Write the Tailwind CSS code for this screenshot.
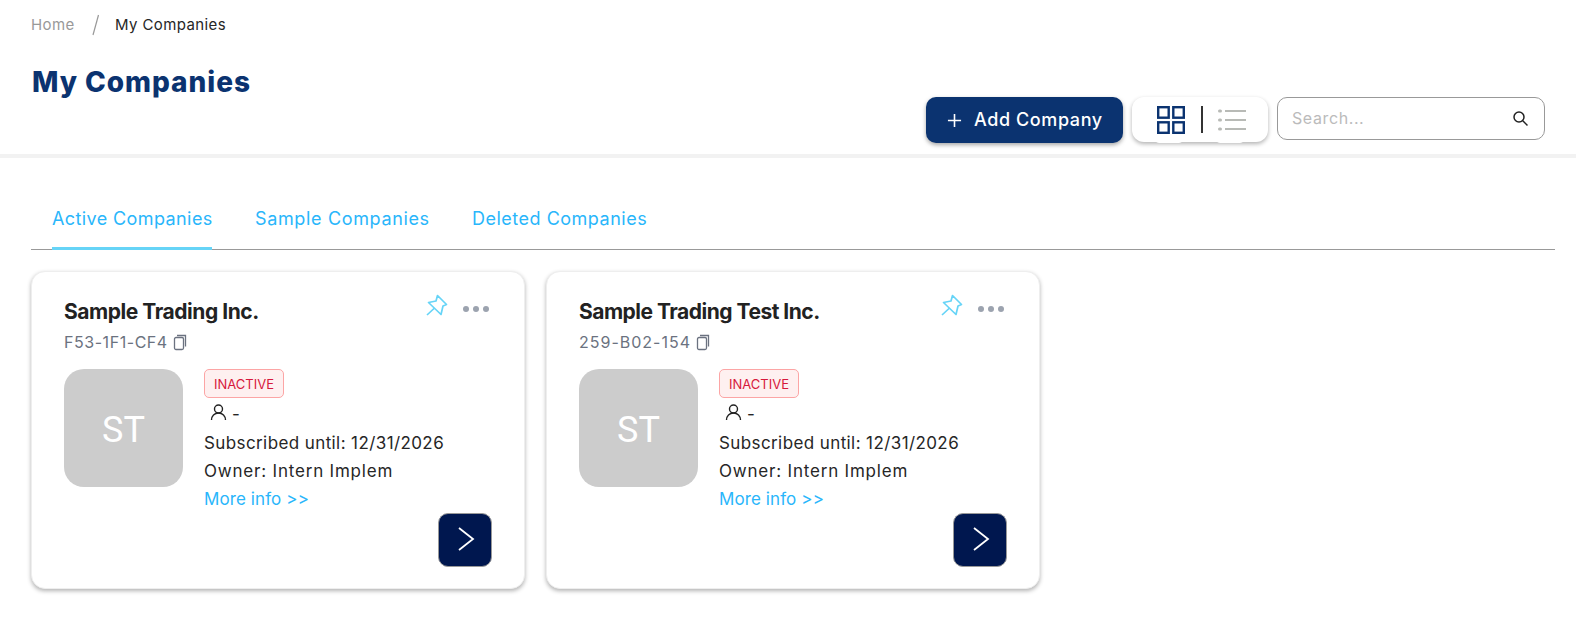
<!DOCTYPE html>
<html><head><meta charset="utf-8"><script src="https://cdn.jsdelivr.net/npm/@tailwindcss/browser@4"></script></head>
<body class="bg-white font-['Inter',sans-serif] overflow-hidden">
<div class="w-[1576px] h-[626px] bg-white">
  <header class="h-[154px] px-[31px] relative">
    <nav class="flex items-center h-[50px] text-[15px] tracking-[0.4px] text-[#262626]">
      <span class="text-[#999] w-[45px]">Home</span>
      <svg class="w-[8px] h-[22px] ml-[16px] mr-[15px]" viewBox="0 0 8 22"><path d="M6.500 1 L1 21" stroke="#999" stroke-width="1.200" fill="none"/></svg>
      <span>My Companies</span>
    </nav>
    <h1 class="mt-[12px] ml-[1px] text-[28px] leading-[40px] font-extrabold text-[#0b3370] tracking-[0.95px]">My Companies</h1>
    <div class="absolute left-[926px] top-[97px] flex gap-[9px] items-start">
      <button class="w-[197px] h-[46px] rounded-[10px] bg-[#0b3370] text-white flex items-center pl-[21px] pb-[2px] shadow-[0_2px_4px_rgba(0,0,0,0.35)] text-[18px] tracking-[0.6px] font-medium whitespace-nowrap">
        <svg class="w-[15px] h-[15px] mr-[12px] mt-[2px]" viewBox="0 0 16 16"><path d="M8 1v14M1 8h14" stroke="#fff" stroke-width="1.700"/></svg>Add Company
      </button>
      <div class="relative w-[136px] h-[45px] rounded-[12px] bg-white flex items-center shadow-[0_2px_4px_rgba(0,0,0,0.3)] pl-[25px]">
        <svg class="w-[28px] h-[28px]" viewBox="0 0 28 28" fill="none" stroke="#0b3370" stroke-width="2.400"><rect x="1.200" y="1.200" width="10.500" height="10.500"/><rect x="16.300" y="1.200" width="10.500" height="10.500"/><rect x="1.200" y="16.300" width="10.500" height="10.500"/><rect x="16.300" y="16.300" width="10.500" height="10.500"/></svg>
        <div class="w-[2px] h-[27px] bg-[#333] ml-[16px] mr-[15px]"></div>
        <svg class="w-[28px] h-[24px]" viewBox="0 0 28 24" fill="none" stroke="#b8bab6" stroke-width="2"><path d="M7 3h21M7 12h21M7 21h21"/><path d="M1.500 3h1M1.500 12h1M1.500 21h1" stroke-linecap="round" stroke-width="3"/></svg>
        <div class="absolute left-[22px] bottom-[-1px] w-[30px] h-[5px] rounded-b-full bg-white"></div>
        <div class="absolute left-[83px] bottom-[-1px] w-[30px] h-[5px] rounded-b-full bg-white"></div>
      </div>
      <div class="w-[268px] h-[43px] rounded-[10px] border border-[#999] bg-white flex items-center justify-between pl-[14px] pr-[15px] text-[16px] tracking-[0.6px] text-[#bbb]">
        <span class="pb-[2px]">Search...</span>
        <svg class="w-[17px] h-[17px]" viewBox="0 0 17 17" fill="none" stroke="#222" stroke-width="1.500"><circle cx="7" cy="7" r="5"/><path d="M10.800 10.800L15.500 15.500"/></svg>
      </div>
    </div>
  </header>
  <div class="h-[4px] bg-[#f2f2f2]"></div>
  <main class="pl-[31px] pr-[21px]">
    <div class="mt-[38px] border-b border-[#999] h-[54px] flex gap-[43px] pl-[21px] text-[18px] tracking-[0.4px] text-[#29b6fb]">
      <div class="h-[54px] w-[160px] pt-[9px] border-b-[3px] border-[#66d4f7] whitespace-nowrap">Active Companies</div>
      <div class="pt-[9px] w-[174px] whitespace-nowrap tracking-[0.65px]">Sample Companies</div>
      <div class="pt-[9px] whitespace-nowrap tracking-[0.5px]">Deleted Companies</div>
    </div>
    <div class="mt-[21px] flex gap-[21px]">
      <article class="relative w-[494px] h-[318px] rounded-[14px] bg-white border border-[#eee] shadow-[0_2px_4px_rgba(0,0,0,0.3)] pl-[32px] pt-[25px]">
        <h2 class="text-[21px] leading-[30px] font-bold text-[#222] tracking-[-0.45px]">Sample Trading Inc.</h2>
        <div class="mt-[3px] flex items-center text-[#6b7280] text-[16px] tracking-[0.55px] leading-[24px]">F53-1F1-CF4<svg class="ml-[5px] w-[15px] h-[17px]" viewBox="0 0 15 17" fill="none" stroke="#6b7280" stroke-width="1.300"><path d="M4 1.500h8.500v11"/><rect x="1.500" y="3.500" width="9" height="12" rx="1.500"/></svg></div>
        <svg class="absolute left-[394px] top-[22px] w-[22px] h-[22px]" viewBox="0 0 22 22" fill="none" stroke="#66d4f7" stroke-width="1.700" stroke-linejoin="round"><path d="M1 21L8 14.500M11.500 1.500L20.500 10.500L17 12L15 20.500L2.500 8.500L10 7Z"/></svg>
        <div class="absolute left-[431px] top-[34px] flex gap-[4px]"><i class="w-[6px] h-[6px] rounded-full bg-[#9ca3af]"></i><i class="w-[6px] h-[6px] rounded-full bg-[#9ca3af]"></i><i class="w-[6px] h-[6px] rounded-full bg-[#9ca3af]"></i></div>
        <div class="mt-[15px] flex">
          <div class="w-[119px] h-[118px] rounded-[20px] bg-[#ccc] pt-[3px] flex items-center justify-center text-white text-[36px] font-['Roboto',sans-serif]">ST</div>
          <div class="ml-[21px] text-[17px] leading-[28px] text-[#262626]">
            <div class="w-[80px] h-[29px] rounded-[5px] border border-[#fca5a5] bg-[#fef0f0] text-[#d7193c] text-[13px] flex items-center justify-center">INACTIVE</div>
            <div class="flex items-center h-[31px] pl-[6px]"><svg class="w-[17px] h-[17px] mb-[2px]" viewBox="0 0 17 17" fill="none" stroke="#222" stroke-width="1.400"><circle cx="8.500" cy="5" r="4"/><path d="M1.500 16c0-4 3-7 7-7s7 3 7 7"/></svg><span class="ml-[5px]">-</span></div>
            <div class="tracking-[0.4px]">Subscribed until: 12/31/2026</div>
            <div class="tracking-[0.8px]">Owner: Intern Implem</div>
            <div class="text-[#29b6fb] tracking-[0.1px]">More info &gt;&gt;</div>
          </div>
        </div>
        <button class="absolute left-[406px] top-[241px] w-[54px] h-[54px] rounded-[10px] bg-[#00174f] border border-[#999] flex items-center justify-center"><svg class="w-[18px] h-[24px] ml-[2px] mb-[2px]" viewBox="0 0 18 24" fill="none" stroke="#fff" stroke-width="1.800"><path d="M2 1l14 11L2 23"/></svg></button>
      </article>
      <article class="relative w-[494px] h-[318px] rounded-[14px] bg-white border border-[#eee] shadow-[0_2px_4px_rgba(0,0,0,0.3)] pl-[32px] pt-[25px]">
        <h2 class="text-[21px] leading-[30px] font-bold text-[#222] tracking-[-0.5px]">Sample Trading Test Inc.</h2>
        <div class="mt-[3px] flex items-center text-[#6b7280] text-[16px] tracking-[1px] leading-[24px]">259-B02-154<svg class="ml-[5px] w-[15px] h-[17px]" viewBox="0 0 15 17" fill="none" stroke="#6b7280" stroke-width="1.300"><path d="M4 1.500h8.500v11"/><rect x="1.500" y="3.500" width="9" height="12" rx="1.500"/></svg></div>
        <svg class="absolute left-[394px] top-[22px] w-[22px] h-[22px]" viewBox="0 0 22 22" fill="none" stroke="#66d4f7" stroke-width="1.700" stroke-linejoin="round"><path d="M1 21L8 14.500M11.500 1.500L20.500 10.500L17 12L15 20.500L2.500 8.500L10 7Z"/></svg>
        <div class="absolute left-[431px] top-[34px] flex gap-[4px]"><i class="w-[6px] h-[6px] rounded-full bg-[#9ca3af]"></i><i class="w-[6px] h-[6px] rounded-full bg-[#9ca3af]"></i><i class="w-[6px] h-[6px] rounded-full bg-[#9ca3af]"></i></div>
        <div class="mt-[15px] flex">
          <div class="w-[119px] h-[118px] rounded-[20px] bg-[#ccc] pt-[3px] flex items-center justify-center text-white text-[36px] font-['Roboto',sans-serif]">ST</div>
          <div class="ml-[21px] text-[17px] leading-[28px] text-[#262626]">
            <div class="w-[80px] h-[29px] rounded-[5px] border border-[#fca5a5] bg-[#fef0f0] text-[#d7193c] text-[13px] flex items-center justify-center">INACTIVE</div>
            <div class="flex items-center h-[31px] pl-[6px]"><svg class="w-[17px] h-[17px] mb-[2px]" viewBox="0 0 17 17" fill="none" stroke="#222" stroke-width="1.400"><circle cx="8.500" cy="5" r="4"/><path d="M1.500 16c0-4 3-7 7-7s7 3 7 7"/></svg><span class="ml-[5px]">-</span></div>
            <div class="tracking-[0.4px]">Subscribed until: 12/31/2026</div>
            <div class="tracking-[0.8px]">Owner: Intern Implem</div>
            <div class="text-[#29b6fb] tracking-[0.1px]">More info &gt;&gt;</div>
          </div>
        </div>
        <button class="absolute left-[406px] top-[241px] w-[54px] h-[54px] rounded-[10px] bg-[#00174f] border border-[#999] flex items-center justify-center"><svg class="w-[18px] h-[24px] ml-[2px] mb-[2px]" viewBox="0 0 18 24" fill="none" stroke="#fff" stroke-width="1.800"><path d="M2 1l14 11L2 23"/></svg></button>
      </article>
    </div>
  </main>
</div>
</body></html>
